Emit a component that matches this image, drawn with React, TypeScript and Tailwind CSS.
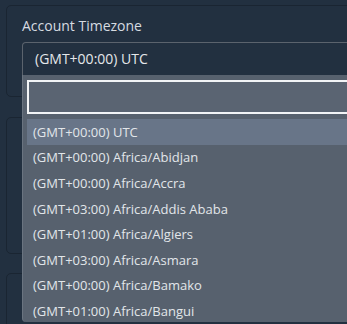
import React from "react";

const options = [
  "(GMT+00:00) UTC",
  "(GMT+00:00) Africa/Abidjan",
  "(GMT+00:00) Africa/Accra",
  "(GMT+03:00) Africa/Addis Ababa",
  "(GMT+01:00) Africa/Algiers",
  "(GMT+03:00) Africa/Asmara",
  "(GMT+00:00) Africa/Bamako",
  "(GMT+01:00) Africa/Bangui",
];

export default function App() {
  return (
    <div
      className="relative w-[347px] h-[324px] overflow-hidden bg-[#223040] pt-[5px] pl-[6px]"
      style={{ fontFamily: '"Open Sans", sans-serif' }}
    >
      <div className="w-[400px] h-[92px] rounded-[5px] border border-[#1a2532] pl-[15px] pt-[10px]">
        <div className="text-[14px] leading-[20px] text-[#d6dbe0]">Account Timezone</div>
        <div className="relative mt-[6px] h-[34px] w-[380px] rounded-t-[4px] border border-[#5b636d] border-b-0 pl-[12px] pt-[6px] text-[14px] leading-[20px] text-[#e4e7ea]">
          (GMT+00:00) UTC
          <div className="absolute left-[-1px] top-[32px] w-[380px] h-[247px] rounded-b-[4px] border-l border-[#6a7480] bg-[#57616e] px-[4px] pt-[5px] z-10 overflow-hidden">
            <div className="h-[34px] w-[400px] border-2 border-[#f2f4f6] bg-[#5a6472]" />
            <div className="mt-[5px]">
              {options.map((o, i) => (
                <div
                  key={o}
                  className={`h-[25.6px] pl-[6px] flex items-center text-[13px] text-[#e2e6ea] ${
                    i === 0 ? "bg-[#687588]" : ""
                  }`}
                >
                  {o}
                </div>
              ))}
            </div>
          </div>
        </div>
      </div>
      <div className="mt-[20px] w-[400px] h-[137px] rounded-[5px] border border-[#1a2532]" />
      <div className="mt-[19px] w-[400px] h-[100px] rounded-[5px] border border-[#1a2532]" />
    </div>
  );
}
